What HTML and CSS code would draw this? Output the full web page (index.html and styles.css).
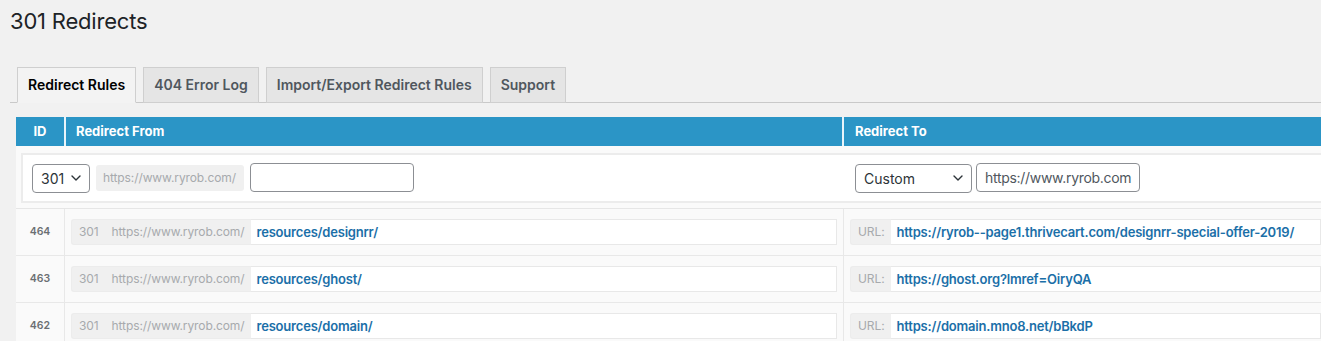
FILE: index.html
```html
<!DOCTYPE html>
<html>
<head>
<meta charset="utf-8">
<title>301 Redirects</title>
<link rel="stylesheet" href="styles.css">
</head>
<body>
<div class="wrap">
  <h1 class="title">301 Redirects</h1>
  <nav class="tabs">
    <a class="tab active">Redirect Rules</a>
    <a class="tab">404 Error Log</a>
    <a class="tab">Import/Export Redirect Rules</a>
    <a class="tab">Support</a>
  </nav>
  <div class="rules">
    <div class="head">
      <div class="h-id">ID</div>
      <div class="h-from">Redirect From</div>
      <div class="h-to">Redirect To</div>
    </div>
    <div class="new-row">
      <div class="new-box">
        <div class="new-from">
          <div class="select s-code"><span>301</span><svg class="chev" width="10" height="6" viewBox="0 0 10 6"><polyline points="1,1 5,5 9,1" fill="none" stroke="#2c3338" stroke-width="1.4" stroke-linecap="round" stroke-linejoin="round"/></svg></div>
          <div class="prefix">https://www.ryrob.com/</div>
          <div class="input i-path"></div>
        </div>
        <div class="new-to">
          <div class="select s-type"><span>Custom</span><svg class="chev" width="10" height="6" viewBox="0 0 10 6"><polyline points="1,1 5,5 9,1" fill="none" stroke="#2c3338" stroke-width="1.4" stroke-linecap="round" stroke-linejoin="round"/></svg></div>
          <div class="input i-url">https://www.ryrob.com</div>
        </div>
      </div>
    </div>
    <div class="list">
      <div class="row">
        <div class="c-id">464</div>
        <div class="c-from"><div class="field"><span class="pre"><span class="code">301</span>https://www.ryrob.com/</span><span class="val">resources/designrr/</span></div></div>
        <div class="c-to"><div class="field"><span class="pre">URL:</span><span class="val">https://ryrob--page1.thrivecart.com/designrr-special-offer-2019/</span></div></div>
      </div>
      <div class="row">
        <div class="c-id">463</div>
        <div class="c-from"><div class="field"><span class="pre"><span class="code">301</span>https://www.ryrob.com/</span><span class="val">resources/ghost/</span></div></div>
        <div class="c-to"><div class="field"><span class="pre">URL:</span><span class="val">https://ghost.org?lmref=OiryQA</span></div></div>
      </div>
      <div class="row">
        <div class="c-id">462</div>
        <div class="c-from"><div class="field"><span class="pre"><span class="code">301</span>https://www.ryrob.com/</span><span class="val">resources/domain/</span></div></div>
        <div class="c-to"><div class="field"><span class="pre">URL:</span><span class="val">https://domain.mno8.net/bBkdP</span></div></div>
      </div>
    </div>
  </div>
</div>
</body>
</html>
```

FILE: styles.css
```css
html, body {
  margin: 0;
  padding: 0;
  background: #f1f1f1;
  overflow: hidden;
}
body {
  font-family: Inter, "Noto Sans", "Liberation Sans", sans-serif;
  color: #1d2327;
}
.wrap {
  padding-left: 10px;
}
.title {
  margin: 0;
  padding-top: 7px;
  font-size: 22px;
  line-height: 29px;
  font-weight: 400;
  letter-spacing: -0.2px;
  color: #1d2327;
}
.tabs {
  display: flex;
  margin-top: 31px;
  border-bottom: 1px solid #c9c9c9;
}
.tab {
  display: block;
  margin-left: 7px;
  margin-bottom: -1px;
  padding: 5px 10px;
  line-height: 24px;
  font-size: 14px;
  font-weight: 600;
  color: #50575e;
  background: #e5e5e5;
  border: 1px solid #cfcfcf;
}
.tab.active {
  color: #000;
  background: #f3f3f3;
  border-bottom-color: #f3f3f3;
}
.rules {
  margin-top: 14px;
  margin-left: 6px;
}
.head {
  display: grid;
  grid-template-columns: 48px 778px 1fr;
  height: 29px;
  line-height: 29px;
  background: #2b95c6;
  color: #fff;
  font-size: 13px;
  font-weight: 700;
}
.h-id {
  text-align: center;
}
.h-from {
  border-left: 2px solid #e9f4fa;
  padding-left: 10px;
}
.h-to {
  border-left: 2px solid #e9f4fa;
  padding-left: 11px;
}
.new-row {
  background: #fafafa;
  padding: 7px 0 5px 5px;
  border-bottom: 1px solid #e6e6e6;
}
.new-box {
  display: flex;
  align-items: center;
  height: 46px;
  background: #fff;
  border: 2px solid #ececec;
  border-right: none;
  padding-left: 9px;
}
.new-from {
  display: flex;
  align-items: center;
  width: 823px;
}
.new-to {
  display: flex;
  align-items: center;
}
.select {
  display: flex;
  align-items: center;
  justify-content: space-between;
  box-sizing: border-box;
  height: 29px;
  border: 1px solid #8c8f94;
  border-radius: 4px;
  background: #fff;
  padding: 0 8px;
  font-size: 14px;
  color: #2c3338;
}
.s-code {
  width: 58px;
}
.s-type {
  width: 117px;
}
.prefix {
  box-sizing: border-box;
  height: 26px;
  line-height: 26px;
  margin-left: 6px;
  padding: 0 8px 0 7px;
  background: #f0f0f0;
  border-radius: 3px;
  color: #a7aaad;
  font-size: 12px;
  letter-spacing: -0.1px;
}
.input {
  box-sizing: border-box;
  height: 29px;
  line-height: 27px;
  border: 1px solid #8c8f94;
  border-radius: 4px;
  background: #fff;
  margin-bottom: 2px;
}
.i-path {
  width: 164px;
  margin-left: 6px;
}
.i-url {
  width: 164px;
  margin-left: 4px;
  padding-left: 8px;
  font-size: 14px;
  letter-spacing: -0.3px;
  color: #50575e;
  white-space: nowrap;
  overflow: hidden;
}
.row {
  display: grid;
  grid-template-columns: 49px 779px 1fr;
  height: 46px;
  background: #fafafa;
  border-bottom: 1px solid #e8e8e8;
}
.c-id {
  border-right: 1px solid #e8e8e8;
  text-align: center;
  line-height: 46px;
  font-size: 10.5px;
  font-weight: 600;
  color: #6b6f73;
}
.c-from {
  border-right: 1px solid #e8e8e8;
  padding: 10px 6px 0 6px;
}
.c-to {
  padding: 10px 0 0 6px;
}
.field {
  display: flex;
  height: 26px;
  line-height: 24px;
}
.pre {
  box-sizing: border-box;
  background: #f0f0f0;
  color: #a7aaad;
  padding: 0 6px 0 7px;
  border: 1px solid #ececec;
  border-right: none;
  border-radius: 3px 0 0 3px;
  white-space: nowrap;
  font-size: 12px;
  letter-spacing: -0.1px;
}
.code {
  margin-right: 13px;
}
.val {
  flex: 1;
  background: #fff;
  border: 1px solid #e8e8e8;
  border-left: none;
  padding-left: 6px;
  font-size: 13px;
  letter-spacing: -0.2px;
  font-weight: 600;
  color: #1b6fa8;
  white-space: nowrap;
}
```
